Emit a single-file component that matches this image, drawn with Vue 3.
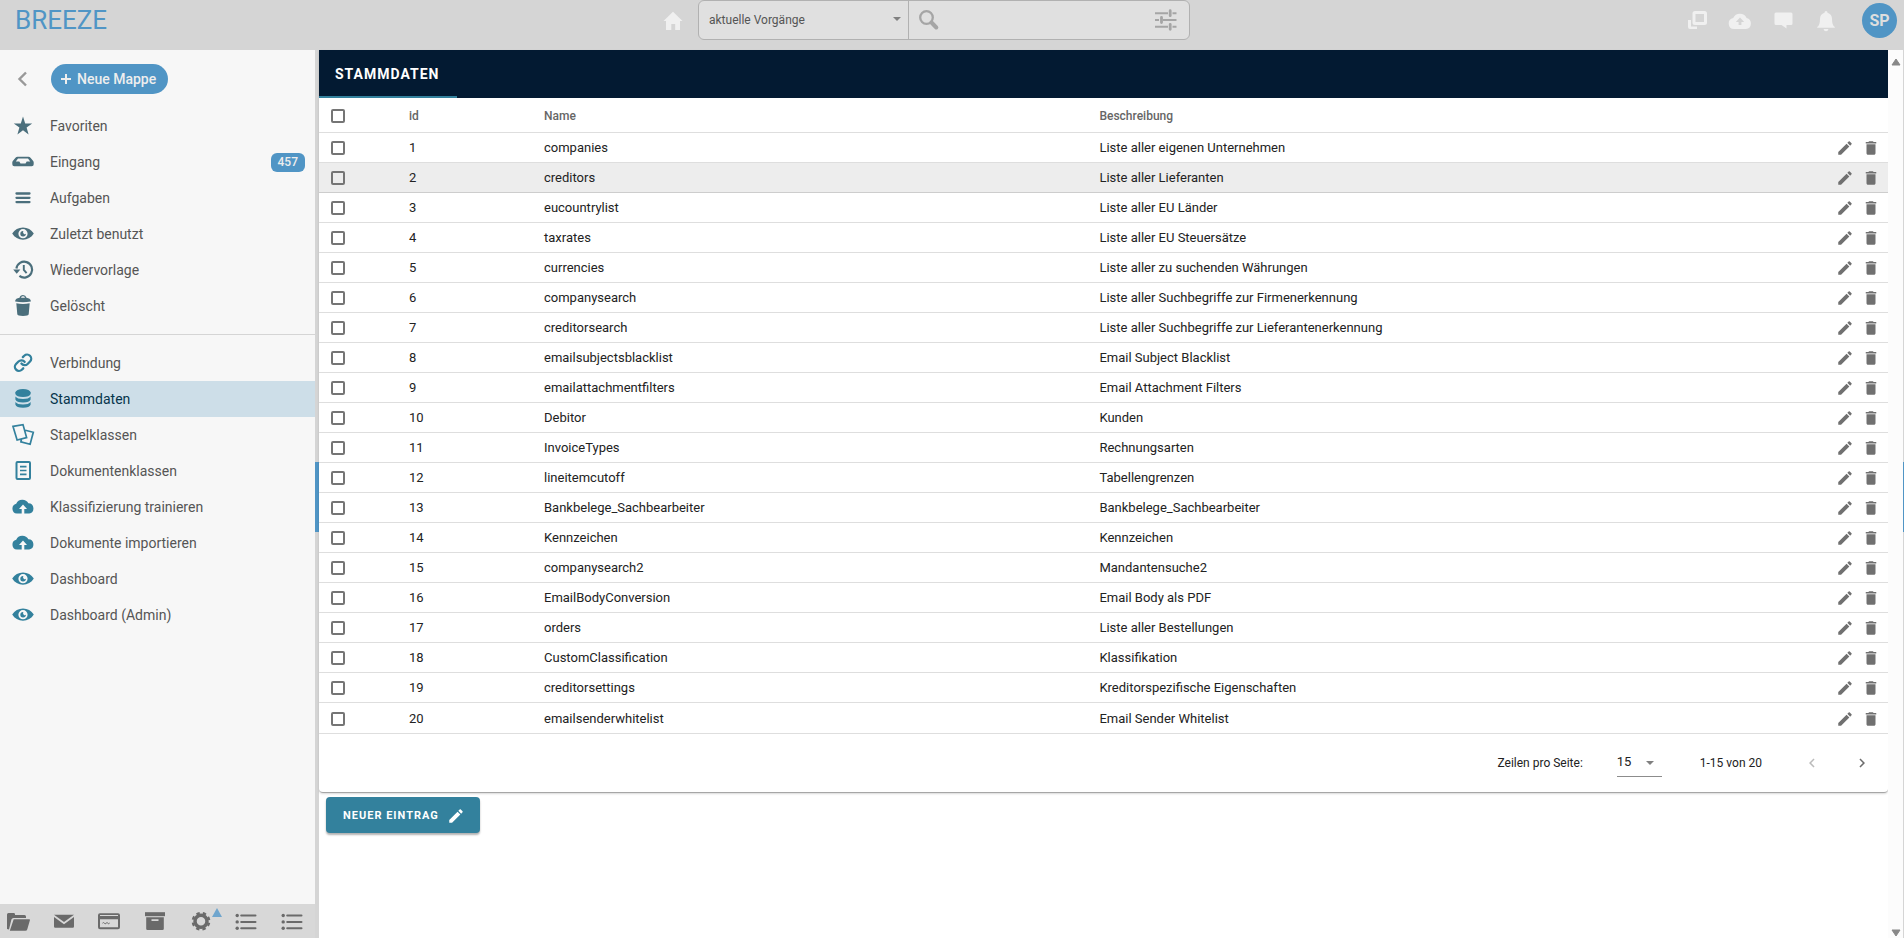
<script setup>
import { ref } from 'vue'

const icons = {
  star: '<path d="M12 2.500l2.200 6.900h7L15.600 13.600l2 6.900L12 16.300l-5.600 4.200 2-6.900L2.800 9.400h7z"/>',
  inbox: '<path fill-rule="evenodd" d="M6.600 6.700h10.800q1.300 0 2.100 1l2.700 3.200q.500.600.500 1.400v2q0 2-2 2H3.300q-2 0-2-2v-2q0-.8.5-1.400l2.700-3.200q.8-1 2.100-1zM7 8.600 4.800 11.500h3.500l1.200 2h5l1.200-2h3.500L17 8.600z"/>',
  bars: '<path d="M5.500 7.500h13M5.500 11.800h13M5.500 16.100h13" fill="none" stroke="currentColor" stroke-width="2.300" stroke-linecap="round"/>',
  eye: '<path fill-rule="evenodd" d="M1.200 11.600C3.600 7.500 7.500 5.500 12 5.500s8.400 2 10.800 6.100c-2.400 4.100-6.300 6.100-10.800 6.100s-8.400-2-10.800-6.100zM12 7.100a4.600 4.600 0 1 0 0 9.200 4.600 4.600 0 0 0 0-9.200z"/><path d="M12.300 8.900a2.800 2.800 0 1 0 2.600 2.900q-1 .8-1.900.2-1.500-1-.7-3.100z"/>',
  history: '<path d="M5.400 10.500a7.900 7.900 0 1 1 3 7.400" fill="none" stroke="currentColor" stroke-width="2.200"/><path d="M2.200 11.500h7.200l-3.700 4.200z"/><path d="M12.800 7v4.800l2.800 3.400" fill="none" stroke="currentColor" stroke-width="1.900"/>',
  bin: '<path fill-rule="evenodd" d="M4.200 6.800Q4.600 4.400 8.500 3.800 9.300 1 12 1t3.500 2.800q3.900.6 4.300 3v.8q-7.800 1.500-15.600 0zM10 3.700h4q-.5-1.400-2-1.400t-2 1.400z"/><path d="M5.300 9.300q6.700 1.200 13.400 0l-1 11q-.3 1.700-5.700 1.700t-5.700-1.700z"/>',
  link: '<g transform="translate(2.200 1.900) scale(.82)" fill="none" stroke="currentColor" stroke-width="2.800" stroke-linecap="round"><path d="M10 13a5 5 0 0 0 7.540.540l3-3a5 5 0 0 0-7.070-7.070l-1.720 1.710"/><path d="M14 11a5 5 0 0 0-7.540-.54l-3 3a5 5 0 0 0 7.070 7.070l1.710-1.710"/></g>',
  database: '<ellipse cx="12" cy="5.500" rx="7.600" ry="3.500"/><path d="M4.400 5.500h15.200v1.600q-1 2.900-7.600 2.900T4.400 7.100z"/><path d="M4.400 9.600q1.900 2.500 7.600 2.500t7.600-2.500v3q-1 2.900-7.600 2.900t-7.600-2.900z"/><path d="M4.400 15.100q1.900 2.500 7.600 2.500t7.600-2.500v2.700q-1 3-7.600 3t-7.600-3z"/>',
  stack: '<path d="M2 3.400 12 1.600l3.600 13L6.100 17zM14.300 7.200l8 2.100-3.200 12-9.200-2.500.5-2.500" fill="none" stroke="currentColor" stroke-width="1.700"/>',
  doc: '<rect x="5.500" y="3" width="13.500" height="17" rx="1" fill="none" stroke="currentColor" stroke-width="2"/><path d="M9 7.600h6.500M9 11.500h6.500M9 15.400h6.500" fill="none" stroke="currentColor" stroke-width="1.700"/>',
  cloud: '<path d="M5.800 18.600a5 5 0 0 1-.6-9.800A6.800 6.800 0 0 1 17.400 8.300a5.200 5.200 0 0 1 .8 10.300h-4.900v-4.500h2.700L12 9.500l-4 4.600h2.700v4.500z"/>',
  pencil: '<path d="M3 17.250V21h3.750L17.810 9.940l-3.750-3.750L3 17.250zM20.710 7.040c.39-.39.39-1.020 0-1.410l-2.340-2.340c-.39-.39-1.020-.39-1.410 0l-1.830 1.830 3.750 3.750 1.830-1.830z"/>',
  trash: '<path d="M6 19c0 1.100.9 2 2 2h8c1.100 0 2-.9 2-2V7H6v12zM19 4h-3.500l-1-1h-5l-1 1H5v2h14V4z"/>',
  left: '<path d="M15.410 7.410L14 6l-6 6 6 6 1.410-1.410L10.830 12z"/>',
  right: '<path d="M10 6L8.590 7.410 13.170 12l-4.580 4.590L10 18l6-6z"/>',
  back: '<path d="M15 5.500 8.500 12l6.500 6.500" fill="none" stroke="currentColor" stroke-width="2.400"/>',
  home: '<path d="M12 2.700 21.500 12H19v9h-4.800v-6h-3.900v6H5v-9H2.500z"/>',
  windows: '<rect x="9" y="3.500" width="11.500" height="11" rx="1" fill="none" stroke="currentColor" stroke-width="3"/><path d="M3 11h3v6.500h6V20H5q-2 0-2-2z"/>',
  topcloud: '<path fill-rule="evenodd" d="M6 20a5.500 5.500 0 0 1-.8-10.900A7.400 7.400 0 0 1 18.600 9 5.600 5.600 0 0 1 18 20zM10.600 16h2.800v-3h2.800L12 8.600 7.800 13h2.800z"/>',
  chat: '<path d="M5 3.500h15q1.500 0 1.500 1.500v9.500q0 1.500-1.500 1.500h-4.500v3.500L10.500 16H5q-1.500 0-1.500-1.500V5q0-1.500 1.500-1.500z"/>',
  bell: '<path d="M12 2q1.500 0 1.500 1.700 4.500 1.300 4.500 6.300 0 6.500 2.800 8v.8H3.200V18Q6 16.500 6 10q0-5 4.500-6.300Q10.500 2 12 2zM9.500 20h5q-.5 2.200-2.500 2.200T9.500 20z"/>',
  search: '<circle cx="9.500" cy="9.500" r="6.300" fill="none" stroke="currentColor" stroke-width="2.300"/><path d="m14.500 14.500 4.800 5" fill="none" stroke="currentColor" stroke-width="4" stroke-linecap="round"/>',
  tune: '<path d="M1 5.200h13M18.500 5.200h4M1 12h4M9 12h13.500M1 18.800h13M18.500 18.800h4" fill="none" stroke="currentColor" stroke-width="1.900"/><path d="M16.200 2.700v5M7.500 9.500v5M16.200 16.300v5" fill="none" stroke="currentColor" stroke-width="2.800" stroke-linecap="round"/>',
  folder: '<path d="M1 19V4.500Q1 3 2.500 3h5.200q1.300 0 1.300 1.300V5h9.500q1.500 0 1.500 1.500V8H7.500Q6 8 5.400 9.500L3 19.500z"/><path d="M7.700 9.200h15.600q.9 0 .6 1l-2.600 9q-.4 1.500-2 1.500H3.800z"/>',
  mail: '<path d="M2 4.700h20L12 11.900z"/><path d="M2 7l10 7.300L22 7v9.500q0 1.200-1.200 1.200H3.200Q2 17.700 2 16.500z"/>',
  card: '<path fill-rule="evenodd" d="M3 3.200h18q2 0 2 2v12q0 2-2 2H3q-2 0-2-2v-12q0-2 2-2zM3 5v1h18V5zM3 9.300v8h18v-8z"/><path d="M5.500 13.200q1-1.300 1.800 0t1.800 0 1.800 0 1.800-.2" fill="none" stroke="currentColor" stroke-width="1"/>',
  archive: '<path d="M2 2.200h20v4H2z"/><path fill-rule="evenodd" d="M3.200 7.200h17.600v11.500q0 1.300-1.300 1.300h-15q-1.300 0-1.300-1.300zM8.500 9.200v1.900h7V9.200z"/>',
  gear: '<g fill="none" stroke="currentColor"><circle cx="12" cy="11.300" r="6" stroke-width="3.500"/><circle cx="12" cy="11.300" r="8.300" stroke-width="2.200" stroke-dasharray="3.400 3.119" stroke-dashoffset="-1.560"/></g>',
  list: '<circle cx="3.200" cy="5.500" r="1.700"/><circle cx="3.200" cy="11.900" r="1.700"/><circle cx="3.200" cy="18.300" r="1.700"/><path d="M7.200 5.500h14.300M7.200 11.900h14.300M7.200 18.300h14.300" fill="none" stroke="currentColor" stroke-width="2" stroke-linecap="round"/>'
}

const folders = [
  { icon: 'star', label: 'Favoriten' },
  { icon: 'inbox', label: 'Eingang', count: 457 },
  { icon: 'bars', label: 'Aufgaben' },
  { icon: 'eye', label: 'Zuletzt benutzt' },
  { icon: 'history', label: 'Wiedervorlage' },
  { icon: 'bin', label: 'Gelöscht' }
]
const settings = [
  { icon: 'link', label: 'Verbindung' },
  { icon: 'database', label: 'Stammdaten', active: true },
  { icon: 'stack', label: 'Stapelklassen' },
  { icon: 'doc', label: 'Dokumentenklassen' },
  { icon: 'cloud', label: 'Klassifizierung trainieren' },
  { icon: 'cloud', label: 'Dokumente importieren' },
  { icon: 'eye', label: 'Dashboard' },
  { icon: 'eye', label: 'Dashboard (Admin)' }
]
const tools = [
  ['folder', 'Ordner'], ['mail', 'Nachrichten'], ['card', 'Karten'], ['archive', 'Archiv'],
  ['gear', 'Einstellungen'], ['list', 'Liste'], ['list', 'Zweite Liste']
]
const actions = [
  ['windows', 'Fenster'], ['topcloud', 'Hochladen'], ['chat', 'Chat'], ['bell', 'Benachrichtigungen']
]
const rows = [
  ['companies', 'Liste aller eigenen Unternehmen'],
  ['creditors', 'Liste aller Lieferanten'],
  ['eucountrylist', 'Liste aller EU Länder'],
  ['taxrates', 'Liste aller EU Steuersätze'],
  ['currencies', 'Liste aller zu suchenden Währungen'],
  ['companysearch', 'Liste aller Suchbegriffe zur Firmenerkennung'],
  ['creditorsearch', 'Liste aller Suchbegriffe zur Lieferantenerkennung'],
  ['emailsubjectsblacklist', 'Email Subject Blacklist'],
  ['emailattachmentfilters', 'Email Attachment Filters'],
  ['Debitor', 'Kunden'],
  ['InvoiceTypes', 'Rechnungsarten'],
  ['lineitemcutoff', 'Tabellengrenzen'],
  ['Bankbelege_Sachbearbeiter', 'Bankbelege_Sachbearbeiter'],
  ['Kennzeichen', 'Kennzeichen'],
  ['companysearch2', 'Mandantensuche2'],
  ['EmailBodyConversion', 'Email Body als PDF'],
  ['orders', 'Liste aller Bestellungen'],
  ['CustomClassification', 'Klassifikation'],
  ['creditorsettings', 'Kreditorspezifische Eigenschaften'],
  ['emailsenderwhitelist', 'Email Sender Whitelist']
].map(([name, text], i) => ({ id: i + 1, name, text }))

const selected = ref([])
const query = ref('')
const toggleAll = (e) => {
  selected.value = e.target.checked ? rows.map((r) => r.id) : []
}
</script>

<template>
  <div class="app">
    <header class="topbar">
      <a class="logo" href="#">BREEZE</a>
      <div class="center">
        <a class="home" href="#" aria-label="Startseite"><svg class="icon" viewBox="0 0 24 24" v-html="icons.home" /></a>
        <form class="search" role="search" @submit.prevent>
          <div class="scope">
            <select aria-label="Suchbereich"><option>aktuelle Vorgänge</option></select>
            <svg class="caret" viewBox="0 0 8 4"><path d="M0 0h8L4 4z" /></svg>
          </div>
          <button class="plain" type="submit" aria-label="Suchen"><svg class="icon" viewBox="0 0 24 24" v-html="icons.search" /></button>
          <input v-model="query" type="text" aria-label="Suchbegriff" />
          <button class="plain" type="button" aria-label="Filter"><svg class="icon" viewBox="0 0 24 24" v-html="icons.tune" /></button>
        </form>
      </div>
      <div class="actions">
        <button v-for="[icon, label] in actions" :key="icon" class="plain" type="button" :aria-label="label">
          <svg class="icon" viewBox="0 0 24 24" v-html="icons[icon]" />
        </button>
        <button class="avatar" type="button">SP</button>
      </div>
    </header>

    <aside class="sidebar">
      <div class="side-head">
        <button class="plain back" type="button" aria-label="Zurück"><svg class="icon" viewBox="0 0 24 24" v-html="icons.back" /></button>
        <button class="new" type="button">
          <svg class="plus" viewBox="0 0 10 10"><path d="M5 0v10M0 5h10" /></svg>Neue Mappe
        </button>
      </div>
      <nav class="nav folders">
        <a v-for="item in folders" :key="item.label" href="#">
          <svg class="icon" viewBox="0 0 24 24" v-html="icons[item.icon]" />
          <span>{{ item.label }}</span>
          <b v-if="item.count" class="badge">{{ item.count }}</b>
        </a>
      </nav>
      <nav class="nav settings">
        <a v-for="item in settings" :key="item.label" href="#" :class="{ active: item.active }">
          <svg class="icon" viewBox="0 0 24 24" v-html="icons[item.icon]" />
          <span>{{ item.label }}</span>
        </a>
      </nav>
      <footer class="tools">
        <button v-for="[icon, label] in tools" :key="label" class="plain" type="button" :aria-label="label">
          <svg class="icon" viewBox="0 0 24 24" v-html="icons[icon]" />
          <svg v-if="icon === 'gear'" class="marker" viewBox="0 0 10 9"><path d="M5 0l5 9H0z" /></svg>
        </button>
      </footer>
    </aside>

    <div class="splitter"><i /></div>

    <main>
      <section class="card">
        <div class="tabs"><button class="tab" type="button">STAMMDATEN</button></div>
        <table>
          <colgroup>
            <col class="c-check" /><col class="c-id" /><col class="c-name" /><col /><col class="c-edit" />
          </colgroup>
          <thead>
            <tr>
              <th class="check"><input type="checkbox" aria-label="Alle auswählen" @change="toggleAll" /></th>
              <th>id</th>
              <th>Name</th>
              <th>Beschreibung</th>
              <th></th>
            </tr>
          </thead>
          <tbody>
            <tr v-for="row in rows" :key="row.id" :class="{ hovered: row.id === 2 }">
              <td class="check"><input v-model="selected" type="checkbox" :value="row.id" :aria-label="row.name + ' auswählen'" /></td>
              <td>{{ row.id }}</td>
              <td>{{ row.name }}</td>
              <td>{{ row.text }}</td>
              <td class="edit">
                <div>
                  <button class="plain" type="button" aria-label="Bearbeiten"><svg viewBox="0 0 24 24" v-html="icons.pencil" /></button>
                  <button class="plain" type="button" aria-label="Löschen"><svg viewBox="0 0 24 24" v-html="icons.trash" /></button>
                </div>
              </td>
            </tr>
          </tbody>
        </table>
        <div class="pager">
          <label for="page-size">Zeilen pro Seite:</label>
          <div class="size">
            <select id="page-size"><option>15</option></select>
            <svg class="caret" viewBox="0 0 8 4"><path d="M0 0h8L4 4z" /></svg>
          </div>
          <span>1-15 von 20</span>
          <div class="steps">
            <button class="plain" type="button" disabled aria-label="Vorherige Seite"><svg viewBox="0 0 24 24" v-html="icons.left" /></button>
            <button class="plain" type="button" aria-label="Nächste Seite"><svg viewBox="0 0 24 24" v-html="icons.right" /></button>
          </div>
        </div>
      </section>
      <button class="create" type="button">NEUER EINTRAG<svg viewBox="0 0 24 24" v-html="icons.pencil" /></button>
    </main>

    <div class="scroll">
      <svg viewBox="0 0 10 8"><path d="M5 1 9 7H1z" /></svg>
      <svg viewBox="0 0 10 8"><path d="M5 7 1 1h8z" /></svg>
    </div>
    <div class="splitter"><i /></div>
  </div>
</template>

<style>
body {
  margin: 0;
}
</style>

<style scoped>
.app {
  display: grid;
  grid-template: 50px minmax(0, 1fr) / 315px 4px minmax(0, 1fr) 15px 1px;
  min-height: 100vh;
  background: #fff;
  color: #222;
  font: 13px/18px Roboto, sans-serif;
}
.app * {
  box-sizing: border-box;
}
button, input, select {
  font: inherit;
  color: inherit;
  margin: 0;
}
svg {
  display: block;
  fill: currentColor;
}
a {
  color: inherit;
  text-decoration: none;
}
.icon {
  width: 24px;
  height: 24px;
  flex: none;
}
.plain {
  display: flex;
  align-items: center;
  justify-content: center;
  padding: 0;
  border: 0;
  background: none;
}

.topbar {
  grid-column: 1 / -1;
  display: grid;
  grid-template-columns: minmax(0, 661fr) 529px minmax(0, 714fr);
  align-items: start;
  background: #d5d5d5;
}
.logo {
  padding: 4px 15px;
  color: #5095c5;
  font-size: 26px;
  line-height: 32px;
}
.center {
  display: flex;
  align-items: flex-start;
  gap: 13px;
}
.home {
  padding-top: 9px;
  color: #f0f0f0;
}
.search {
  flex: 1;
  display: flex;
  height: 40px;
  border: 1px solid #b1b1b1;
  border-radius: 6px;
  background: #e0e0e0;
  color: #a5a5a5;
}
.scope {
  position: relative;
  width: 210px;
  border-right: 1px solid #b1b1b1;
}
.scope select {
  width: 100%;
  height: 38px;
  padding: 0 24px 0 10px;
  border: 0;
  background: none;
  color: #555;
  font-size: 12px;
  appearance: none;
}
.caret {
  position: absolute;
  width: 8px;
  height: 4px;
  color: #808080;
  pointer-events: none;
}
.scope .caret {
  right: 7px;
  top: 16px;
}
.search .plain {
  width: 40px;
}
.search .plain:last-child {
  width: 46px;
}
.search input {
  flex: 1;
  min-width: 0;
  border: 0;
  background: none;
}
.actions {
  display: flex;
  align-items: center;
  justify-content: flex-end;
  gap: 19px;
  padding: 3px 7px 0 0;
  color: #f0f0f0;
}
.avatar {
  width: 35px;
  height: 35px;
  margin-left: 5px;
  padding: 0;
  border: 0;
  border-radius: 50%;
  background: #5095c5;
  color: #dedede;
  font-size: 16px;
  font-weight: 700;
}

.sidebar {
  display: flex;
  flex-direction: column;
  background: #f7f7f7;
  color: #555;
  font-size: 14px;
}
.side-head {
  display: flex;
  align-items: center;
  gap: 16px;
  padding: 14px 11px;
}
.back {
  color: #999;
}
.new {
  display: flex;
  align-items: center;
  gap: 6px;
  height: 30px;
  padding: 0 12px 0 10px;
  border: 0;
  border-radius: 15px;
  background: #5095c5;
  color: #eee;
  font-weight: 500;
}
.plus {
  width: 10px;
  height: 10px;
  stroke: currentColor;
  stroke-width: 2;
}
.nav a {
  display: flex;
  align-items: center;
  gap: 15px;
  height: 36px;
  padding: 0 10px 0 11px;
}
.nav span {
  flex: 1;
}
.folders {
  padding-bottom: 10px;
  border-bottom: 1px solid #d5d5d5;
}
.folders .icon {
  color: #4b6f7c;
}
.settings {
  flex: 1;
  padding-top: 10px;
}
.settings .icon {
  color: #33819d;
}
.nav .active {
  background: #cddee8;
  color: #06354c;
}
.badge {
  padding: 0 7px;
  border-radius: 6px;
  background: #5095c5;
  color: #eee;
  font-size: 12px;
  line-height: 19px;
  font-weight: 500;
}
.tools {
  display: flex;
  justify-content: space-between;
  align-items: center;
  height: 34px;
  padding: 2px 11px 0 6px;
  background: #d8d8d8;
  color: #6a6a6a;
}
.tools .plain {
  position: relative;
}
.marker {
  position: absolute;
  left: 23px;
  top: -2px;
  width: 10px;
  height: 9px;
  color: #6fa5cd;
}

.splitter {
  display: flex;
  flex-direction: column;
  justify-content: center;
  background: #d5d5d5;
}
.splitter i {
  height: 70px;
  margin-top: 6px;
  background: #5095c5;
}

main {
  min-width: 0;
}
.card {
  border-bottom: 1px solid #a6a6a6;
  border-radius: 0 0 4px 4px;
  box-shadow: 0 1px 2px rgba(0, 0, 0, 0.15);
}
.tabs {
  display: flex;
  height: 48px;
  background: #031a32;
}
.tab {
  min-width: 138px;
  padding: 2px 16px 0;
  border: 0;
  border-bottom: 2px solid #33819d;
  background: none;
  color: #fff;
  font-size: 14px;
  font-weight: 700;
  letter-spacing: 1px;
  text-align: left;
}
table {
  width: 100%;
  table-layout: fixed;
  border-collapse: collapse;
}
.c-check {
  width: 74px;
}
.c-id {
  width: 135px;
}
.c-name {
  width: 35.4%;
}
.c-edit {
  width: 80px;
}
th, td {
  height: 30px;
  padding: 2px 16px 0;
  text-align: left;
}
th {
  height: 34px;
  color: #666;
  font-size: 12px;
  font-weight: 500;
}
tbody tr {
  border-top: 1px solid #dedede;
}
tbody tr:last-child td {
  height: 31px;
}
tbody .hovered {
  background: #ededed;
}
tbody .hovered + tr {
  border-top-color: #cdcdcd;
}
.check {
  padding-left: 12px;
}
.check input {
  display: block;
  width: 14px;
  height: 14px;
  border: 2px solid #757575;
  border-radius: 2px;
  appearance: none;
}
.check input:checked {
  background: #33819d;
}
.edit {
  padding: 2px 8px 0 0;
}
.edit div {
  display: flex;
  justify-content: flex-end;
  gap: 8px;
  color: #707070;
}
.edit svg, .pager .plain svg, .create svg {
  width: 18px;
  height: 18px;
}
.pager {
  display: flex;
  align-items: center;
  justify-content: flex-end;
  height: 59px;
  border-top: 1px solid #dedede;
  font-size: 12px;
}
.size {
  position: relative;
  width: 45px;
  margin: 0 38px 0 34px;
}
.size select {
  display: block;
  width: 100%;
  height: 28px;
  padding: 0 0 2px;
  border: 0;
  border-bottom: 1px solid #8c8c8c;
  border-radius: 0;
  background: none;
  font-size: 13px;
  appearance: none;
}
.size .caret {
  right: 8px;
  top: 12px;
}
.steps {
  display: flex;
  padding: 0 1px 0 25px;
  color: #6c6c6c;
}
.steps .plain {
  width: 50px;
}
.steps .plain:disabled {
  color: #bbb;
}
.create {
  display: flex;
  align-items: center;
  gap: 8px;
  height: 36px;
  margin: 4px 7px;
  padding: 2px 15px 0 17px;
  border: 0;
  border-radius: 4px;
  background: #33819d;
  box-shadow: 0 2px 2px rgba(0, 0, 0, 0.3);
  color: #fff;
  font-size: 11px;
  font-weight: 700;
  letter-spacing: 1px;
}
.scroll {
  display: flex;
  flex-direction: column;
  justify-content: space-between;
  align-items: center;
  padding: 8px 0 1px;
  background: #fcfcfc;
  color: #888;
}
.scroll svg {
  width: 10px;
  height: 8px;
  stroke: currentColor;
  stroke-linejoin: round;
}
</style>
